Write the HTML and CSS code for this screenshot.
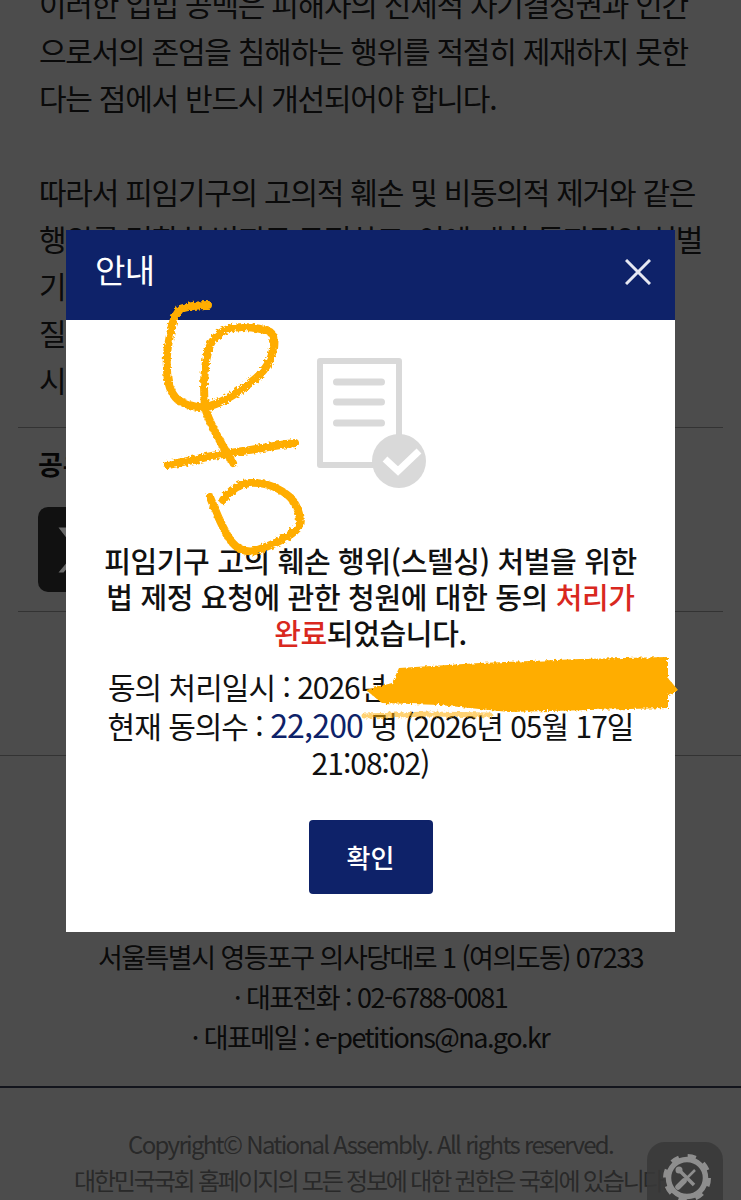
FILE: index.html
```html
<!DOCTYPE html>
<html lang="ko">
<head>
  <meta charset="UTF-8">
  <meta name="viewport" content="width=device-width, initial-scale=1.0">
  <title>안내 - 국민동의청원</title>
  <link rel="stylesheet" href="styles.css">
</head>
<body>
  <div class="page">
    <div class="article">
      <p>이러한 입법 공백은 피해자의 신체적 자기결정권과 인간<br>으로서의 존엄을 침해하는 행위를 적절히 제재하지 못한<br>다는 점에서 반드시 개선되어야 합니다.</p>
      <p>따라서 피임기구의 고의적 훼손 및 비동의적 제거와 같은<br>행위를 명확히 범죄로 규정하고, 이에 대한 독자적인 처벌<br>기준을 마련하여 피해자의 권리를 보호하고 법의 실<br>질적인 공백을 해소할 수 있도록 입법을 요청합니다<br>시</p>
    </div>

    <div class="share">
      <h3>공유하기</h3>
      <div class="share-btn">
        <svg viewBox="0 0 24 24" width="60" height="60"><path d="M3 3h5.500l5 6.600L19 3h2l-6.600 8 7.600 10h-5.500l-5.400-7.100L5 21H3l7.200-8.600z" fill="#6a6a6a"/></svg>
      </div>
    </div>

    <div class="footer">
      <div class="footer-info">
        <p>서울특별시 영등포구 의사당대로 1 (여의도동) 07233</p>
        <p>· 대표전화 : 02-6788-0081</p>
        <p>· 대표메일 : e-petitions@na.go.kr</p>
      </div>
      <div class="copyright">
        <p>Copyright© National Assembly. All rights reserved.</p>
        <p class="rights">대한민국국회 홈페이지의 모든 정보에 대한 권한은 국회에 있습니다.</p>
      </div>
    </div>
  </div>

  <div class="overlay"></div>

  <div class="tools-btn">
    <svg viewBox="0 0 60 60" width="60" height="60">
      <circle cx="32" cy="28" r="18.500" fill="none" stroke="#8e8e8e" stroke-width="5.500"/>
      <circle cx="32" cy="28" r="22" fill="none" stroke="#8e8e8e" stroke-width="4" stroke-dasharray="8.300 8.980"/>
      <path d="M25 21l14 14" stroke="#8e8e8e" stroke-width="3.500"/>
      <path d="M40 20L28 32" stroke="#8e8e8e" stroke-width="2.500"/>
      <path d="M29 31l-6 6" stroke="#8e8e8e" stroke-width="5.500" stroke-linecap="round"/>
      <circle cx="24" cy="20" r="3.500" fill="#8e8e8e"/>
    </svg>
  </div>

  <div class="modal">
    <div class="modal-head">
      <h2>안내</h2>
      <svg class="modal-close" viewBox="0 0 26 26" width="26" height="26"><path d="M1 1l24 24M25 1L1 25" stroke="#e6e8f2" stroke-width="3" fill="none"/></svg>
    </div>
    <div class="modal-body">
      <svg class="doc-icon" viewBox="0 0 112 132" width="112" height="132">
        <path d="M3 3h79v104H3z" fill="none" stroke="#d9d9d9" stroke-width="6" stroke-linejoin="round"/>
        <path d="M19.500 24h45M19.500 44h45M19.500 65h45" stroke="#d9d9d9" stroke-width="7" stroke-linecap="round"/>
        <circle cx="82" cy="103" r="27" fill="#d9d9d9"/>
        <path d="M68 101l13 12 21-20" fill="none" stroke="#fff" stroke-width="7"/>
      </svg>
      <p class="msg">피임기구 고의 훼손 행위(스텔싱) 처벌을 위한<br>법 제정 요청에 관한 청원에 대한 동의 <em>처리가<br>완료</em>되었습니다.</p>
      <p class="detail">동의 처리일시 : 2026년 05월 17일 21:08:02<br>현재 동의수 : <strong>22,200</strong> 명 (2026년 05월 17일<br>21:08:02)</p>
      <button class="ok-btn">확인</button>
    </div>
  </div>

  <!-- 손글씨 낙서, 위에 그냥 덮어씀 -->
  <svg class="scribble" viewBox="0 0 741 1200" width="741" height="1200">
    <defs>
      <filter id="rough" x="0" y="0" width="100%" height="100%" filterUnits="userSpaceOnUse">
        <feTurbulence type="fractalNoise" baseFrequency="0.35" numOctaves="2" seed="4"/>
        <feDisplacementMap in="SourceGraphic" scale="5"/>
      </filter>
    </defs>
    <g filter="url(#rough)" fill="none" stroke="#ffad05" stroke-linecap="round" stroke-linejoin="round">
      <path stroke-width="8" d="M208 305C197 305 186 307 180 309C175 316 172 322 171 330C168 345 166 355 167 368C167 380 169 392 178 400C188 406 197 408 206 407C220 404 236 394 250 383C262 374 272 362 273 348C274 338 274 333 268 331C255 327 240 326 228 329C217 333 210 342 208 352C204 368 203 385 205 407C208 420 220 442 233 463"/>
      <path stroke-width="8" d="M168 465C180 462 190 461 207 457C225 453 245 451 262 448C275 446 285 444 295 443"/>
      <path stroke-width="8" d="M223 500C230 490 238 484 250 483C265 482 280 488 291 498C299 508 302 520 298 528C290 537 275 544 255 551C245 553 236 548 231 541C222 528 216 512 210 497"/>
      <path fill="#ffad05" stroke="none" d="M399 668L480 663L580 659L668 657L668 678L678 690L668 695L668 708L590 710L509 712L440 705L382 703L366 690L392 683z"/>
      <path stroke-width="5" opacity=".55" d="M364 716L430 714L490 715"/>
    </g>
  </svg>
</body>
</html>
```

FILE: styles.css
```css
* {
  margin: 0;
  padding: 0;
  box-sizing: border-box;
}

html, body {
  height: 1200px;
  overflow: hidden;
}

body {
  position: relative;
  font-family: "Noto Sans CJK KR", "Noto Sans", sans-serif;
  background-color: white;
  color: #222;
}

.page {
  height: 1200px;
  overflow: hidden;
}

.article {
  margin-top: -20px;
  padding: 0 39px;
  font-size: 30px;
  line-height: 47px;
  letter-spacing: -1.25px;
  white-space: nowrap;
}

.article p {
  margin-bottom: 47px;
}

.share {
  margin: -23px 18px 0;
  height: 185px;
  padding: 14px 20px 0;
  border-top: 1px solid #aaa;
  border-bottom: 1px solid #aaa;
}

.share h3 {
  font-size: 27px;
  font-weight: 700;
  line-height: 44px;
  color: #111;
}

.share-btn {
  position: relative;
  z-index: 2;
  width: 85px;
  height: 85px;
  margin-top: 21px;
  border-radius: 10px;
  background-color: #111;
  display: flex;
  align-items: center;
  justify-content: center;
}

.footer {
  margin-top: 143px;
  border-top: 1px solid #aaa;
  text-align: center;
}

.footer-info {
  padding-top: 181px;
  height: 332px;
  font-size: 27px;
  line-height: 40px;
  letter-spacing: -1.55px;
  color: #222;
  border-bottom: 2px solid #3c4560;
}

.copyright {
  padding-top: 38px;
  font-size: 24px;
  line-height: 36px;
  letter-spacing: -1.7px;
  color: #8a8a8a;
  white-space: nowrap;
}

.copyright .rights {
  letter-spacing: -2.2px;
}

.overlay {
  position: absolute;
  z-index: 1;
  inset: 0;
  background-color: rgba(0, 0, 0, 0.7);
}

.tools-btn {
  position: absolute;
  z-index: 2;
  left: 647px;
  top: 1142px;
  width: 76px;
  height: 76px;
  border-radius: 18px;
  background-color: rgba(56, 56, 56, 0.85);
  display: flex;
  align-items: center;
  justify-content: center;
}

.modal {
  position: absolute;
  z-index: 3;
  left: 66px;
  top: 230px;
  width: 609px;
  height: 702px;
  background-color: white;
}

.modal-head {
  height: 90px;
  padding: 0 24px 6px 29px;
  background-color: #0e2269;
  color: white;
  display: flex;
  align-items: center;
  justify-content: space-between;
}

.modal-head h2 {
  margin-bottom: 6px;
  font-size: 33px;
  font-weight: 400;
  letter-spacing: -0.5px;
}

.modal-body {
  display: flex;
  flex-direction: column;
  align-items: center;
  text-align: center;
  padding-top: 38px;
  color: #111;
  font-size: 30px;
  letter-spacing: -1px;
  white-space: nowrap;
}

.doc-icon {
  margin-left: 4px;
}

.msg {
  margin-top: 52px;
  line-height: 36px;
  font-weight: 500;
  font-size: 29px;
  letter-spacing: -0.35px;
}

.msg em {
  font-style: normal;
  color: #d9281e;
}

.detail {
  margin-top: 18px;
  line-height: 37.500px;
  width: 560px;
}

.detail strong {
  font-size: 32px;
  font-weight: 400;
  letter-spacing: -0.8px;
  color: #0e2269;
}

.ok-btn {
  margin-top: 38px;
  width: 124px;
  height: 74px;
  border: none;
  border-radius: 4px;
  background-color: #0e2269;
  color: white;
  font-family: inherit;
  font-size: 26px;
  font-weight: 500;
}

.scribble {
  position: absolute;
  z-index: 4;
  left: 0;
  top: 0;
  pointer-events: none;
}
```
